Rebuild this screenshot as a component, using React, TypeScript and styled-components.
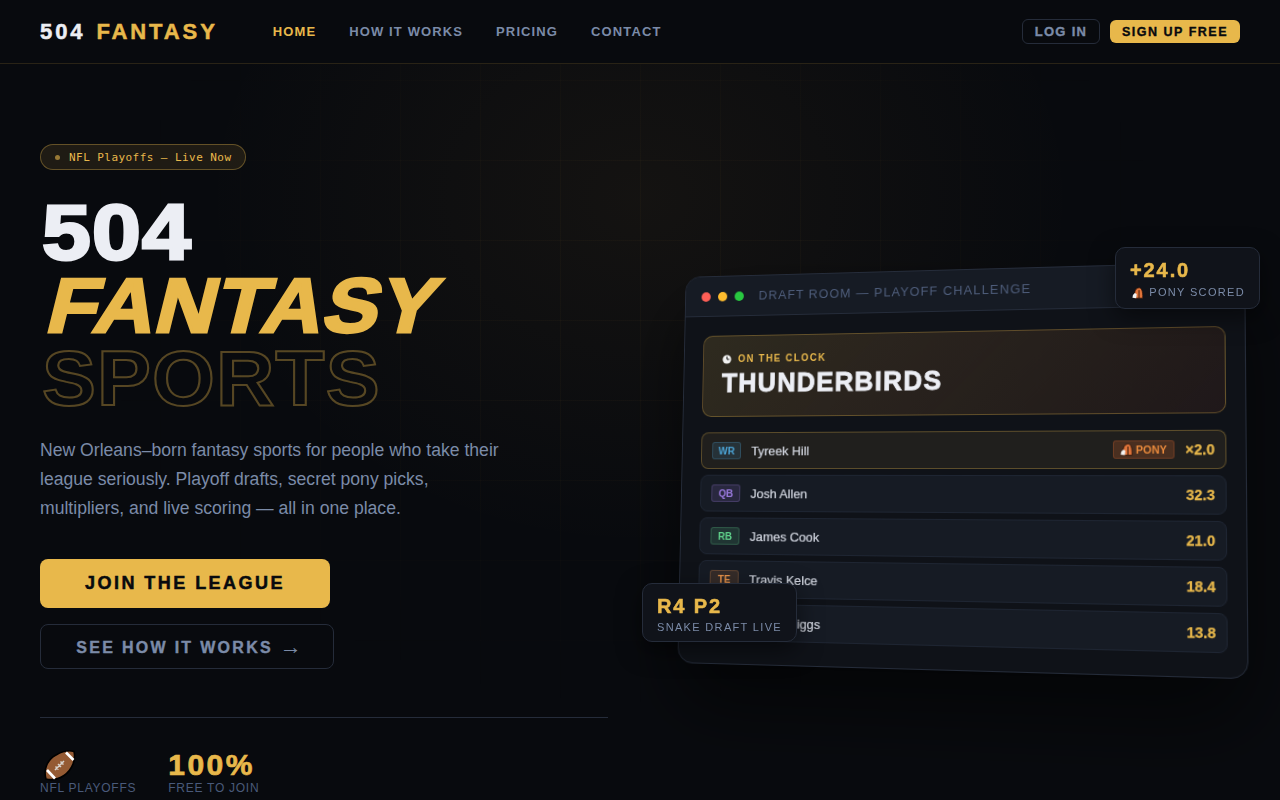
import React from "react";
import styled, { createGlobalStyle } from "styled-components";

const Global = createGlobalStyle`
  * { box-sizing: border-box; margin: 0; padding: 0; }
  html, body { background: #080a0e; }
  body { font-family: "Liberation Sans", Arial, sans-serif; color: #eceef4; overflow: hidden; height: 800px; }
`;
const Page = styled.div`
  width: 1280px; height: 800px; overflow: hidden; position: relative; background: #080a0e;
`;
const Glow = styled.div`
  position: absolute; left: 140px; top: 0; width: 1000px; height: 600px; pointer-events: none;
  background: radial-gradient(ellipse at 50% 33%, rgba(232,170,75,.055), transparent 62%);
`;
const Grid = styled.div`
  position: absolute; inset: 0; pointer-events: none;
  background-image: linear-gradient(rgba(232,184,75,.03) 1px, transparent 1px), linear-gradient(90deg, rgba(232,184,75,.03) 1px, transparent 1px);
  background-size: 80px 80px;
  mask-image: radial-gradient(ellipse 560px 420px at 640px 300px, #000 30%, transparent 100%);
`;
const Nav = styled.nav`
  height: 64px; display: flex; align-items: center; justify-content: space-between; padding: 0 40px;
  border-bottom: 1px solid rgba(232,184,75,.15); position: relative; z-index: 2; background: #080a0e;
`;
const NavLeft = styled.div`display: flex; align-items: center; gap: 55px;`;
const Logo = styled.div`
  font: 700 22px "Liberation Sans", sans-serif; letter-spacing: 2.9px; color: #eceef4; -webkit-text-stroke: .5px currentColor;
  span { color: #e8b84b; margin-left: 2px; }
`;
const NavLinks = styled.ul`display: flex; gap: 33px; list-style: none;`;
const NavLink = styled.li<{ $active?: boolean }>`
  font: 700 13px "Liberation Sans", sans-serif; letter-spacing: 1.12px; color: ${p => p.$active ? "#e8b84b" : "#7b8ba8"};
`;
const NavActions = styled.div`display: flex; gap: 10px; align-items: center;`;
const GhostSmall = styled.button`
  height: 25px; width: 78px; border: 1px solid #252c3a; border-radius: 6px; background: transparent;
  font: 700 13px "Liberation Sans", sans-serif; letter-spacing: 1.3px; color: #7b8ba8; -webkit-text-stroke: .35px currentColor;
`;
const GoldSmall = styled.button`
  height: 23px; width: 130px; border: 0; border-radius: 6px; background: #e8b84b;
  font: 700 12.5px "Liberation Sans", sans-serif; letter-spacing: 1.5px; color: #080a0e; -webkit-text-stroke: .35px currentColor;
`;
const Hero = styled.main`display: flex; height: 736px; position: relative; padding-left: 40px;`;
const Left = styled.section`position: relative; z-index: 1; padding-top: 80px; width: 568px;`;
const Badge = styled.div`
  display: inline-flex; align-items: center; gap: 9px; height: 26px; padding: 0 14px; border-radius: 13px;
  border: 1px solid rgba(232,184,75,.35); background: rgba(232,184,75,.1);
  font: 11px "DejaVu Sans Mono", monospace; letter-spacing: .44px; color: #e8b84b;
`;
const Dot = styled.i`width: 5px; height: 5px; border-radius: 50%; background: #e8b84b; opacity: .6;`;
const Title = styled.h1`
  margin-top: 26px; padding-left: 2px; font: 700 77px/73px "Liberation Sans", sans-serif; letter-spacing: 1px; color: #eceef4;
  display: flex; flex-direction: column; align-items: flex-start;
`;
const Solid = styled.span`
  display: inline-block; -webkit-text-stroke: 2.8px #eceef4; transform: scaleX(1.14); transform-origin: 0 50%;
`;
const Gold = styled.span`
  color: #e8b84b; -webkit-text-stroke: 2.8px #e8b84b; display: inline-block; margin-left: 2px;
  transform: skewX(-14deg) scaleX(1.08); transform-origin: 0 83%;
`;
const Outline = styled.span`
  display: inline-block; color: transparent; -webkit-text-stroke: 2px rgba(232,184,75,.35); transform: scaleX(1.05); transform-origin: 0 50%;
`;
const Sub = styled.p`
  margin-top: 21px; width: 470px; font: 17.6px/29px "Liberation Sans", sans-serif; color: #7b8ba8;
`;
const Buttons = styled.div`margin-top: 36px; display: flex; flex-direction: column; gap: 16px; align-items: flex-start;`;
const Primary = styled.button`
  width: 290px; height: 49px; border: 0; border-radius: 8px; background: #e8b84b;
  font: 700 18px "Liberation Sans", sans-serif; letter-spacing: 2.45px; color: #080a0e; -webkit-text-stroke: .5px currentColor;
`;
const Secondary = styled.button`
  width: 294px; height: 45px; border: 1px solid #252c3a; border-radius: 8px; background: transparent; padding-left: 4px;
  font: 700 16px "Liberation Sans", sans-serif; letter-spacing: 2.3px; color: #7b8ba8; -webkit-text-stroke: .4px currentColor;
`;
const Arrow = styled.span`font: 400 22px/1 "Liberation Sans", sans-serif; letter-spacing: 0; -webkit-text-stroke: 0; vertical-align: -1px;`;
const Stats = styled.div`margin-top: 48px; width: 568px; border-top: 1px solid #252c3a; padding-top: 32px; display: flex; gap: 32px;`;
const Stat = styled.div`display: flex; flex-direction: column; align-items: flex-start;`;
const StatIcon = styled.div`height: 30px; padding-left: 4px;`;
const StatValue = styled.div`font: 700 30px/30px "Liberation Sans", sans-serif; letter-spacing: 2.5px; color: #e8b84b; -webkit-text-stroke: .7px currentColor;`;
const StatLabel = styled.div`font: 12px/16px "Liberation Sans", sans-serif; letter-spacing: .74px; color: #4a5a7a;`;
const Right = styled.section`position: relative; z-index: 1; flex: 1;`;
const Scene = styled.div`
  position: absolute; left: 60px; top: 203px; width: 570px; height: 402px;
`;
const Card = styled.div`
  width: 100%; height: 100%; background: #0f1218; border: 1px solid #252c3a; border-radius: 16px; overflow: hidden;
  transform: perspective(1000px) rotateY(-8deg) rotateX(3deg);
  box-shadow: 0 40px 80px rgba(0,0,0,.6);
`;
const CardBar = styled.div`
  height: 42px; background: #161b24; border-bottom: 1px solid #252c3a; display: flex; align-items: center; padding: 0 17px; gap: 8px;
`;
const Light = styled.i<{ $c: string }>`width: 10px; height: 10px; border-radius: 50%; background: ${p => p.$c};`;
const BarTitle = styled.span`margin-left: 8px; font: 400 13px "Liberation Sans", sans-serif; letter-spacing: 1.15px; color: #4f5e7c;`;
const CardBody = styled.div`padding: 18px 18px 18px 20px; display: flex; flex-direction: column; gap: 6px;`;
const Clock = styled.div`
  height: 85px; border: 1px solid rgba(232,184,75,.3); border-radius: 10px; padding: 16px 20px; margin: 2px 0 10px;
  background: linear-gradient(135deg, rgba(232,184,75,.15), rgba(232,100,50,.08));
`;
const ClockLabel = styled.div`font: 700 10px/16px "Liberation Sans", sans-serif; letter-spacing: 1.5px; color: #e8b84b; display: flex; align-items: center; gap: 7px;`;
const ClockName = styled.div`font: 700 27px/30px "Liberation Sans", sans-serif; letter-spacing: 1.3px; color: #eceef4; margin-top: 2px; -webkit-text-stroke: .8px currentColor;`;
const Row = styled.div<{ $hi?: boolean }>`
  height: 38px; border-radius: 8px; display: flex; align-items: center; padding: 0 10px 0 11px; gap: 11px;
  background: ${p => p.$hi ? "rgba(232,184,75,.08)" : "#161b24"};
  border: 1px solid ${p => p.$hi ? "rgba(232,184,75,.3)" : "#1e2532"};
`;
const Pos = styled.span<{ $c: string }>`
  width: 31px; height: 18px; border-radius: 3px; display: flex; align-items: center; justify-content: center;
  font: 700 10.5px "Liberation Sans", sans-serif; color: ${p => p.$c}; background: ${p => p.$c}26; border: 1px solid ${p => p.$c}40;
`;
const Name = styled.span`flex: 1; font: 400 13.2px "Liberation Sans", sans-serif; color: #d4d8e2; -webkit-text-stroke: .2px currentColor;`;
const PonyTag = styled.span`
  height: 18px; display: flex; align-items: center; gap: 3px; padding: 0 6.5px; margin-right: -1px; border-radius: 3px; background: rgba(240,110,50,.2); border: 1px solid rgba(240,110,50,.22);
  font: 700 10.5px "Liberation Sans", sans-serif; color: #ea8a3c;
`;
const Pts = styled.span`font: 700 14px "Liberation Sans", sans-serif; color: #e8b84b; -webkit-text-stroke: .25px currentColor;`;
const FloatValue = styled.div`font: 700 20px/20px "Liberation Sans", sans-serif; letter-spacing: 1.9px; color: #e8b84b; -webkit-text-stroke: .55px currentColor;`;
const FloatLabel = styled.div`font: 400 11px/14px "Liberation Sans", sans-serif; letter-spacing: 1.33px; color: #7b8ba8; margin-top: 4px; display: flex; align-items: center; gap: 6px; white-space: nowrap;`;
const Float = styled.div`
  position: absolute; background: #10131a; border: 1px solid #252c3a; border-radius: 10px; padding: 12px 14px; z-index: 3;
  box-shadow: 0 8px 24px rgba(0,0,0,.5);
`;
const FloatTop = styled(Float)`
  left: 447px; top: -20px; width: 145px; height: 62px;
  ${FloatLabel} { line-height: 17px; padding-left: 2px; }
`;
const FloatBottom = styled(Float)`left: -26px; top: 316px; width: 155px; height: 59px;`;

function Football() {
  return (
    <svg width="32" height="31" viewBox="0 0 32 31">
      <path d="M2 29C-1 19 4 9 12 5 18 1.5 25 0 30 1.5 32 10 28 20 20 25.5 14 29.5 8 30.5 2 29Z" fill="#945a33" stroke="#000" strokeWidth="1.6" />
      <path d="M3 20L11 28.5M22 2.5L29.5 10" stroke="#fff" strokeWidth="2.6" />
      <path d="M11 20L20 11M11.5 16.5L14.5 19.5M14 14L17 17M16.5 11.5L19.5 14.5" stroke="#d8d2cc" strokeWidth="1.5" />
    </svg>
  );
}
function PonyIcon() {
  return (
    <svg width="12" height="12" viewBox="0 0 12 12">
      <path d="M2.5 11.5L3 5C3.5 2 5.5.5 7.5.5 10 .5 11.5 3 11.5 11.5Z" fill="#e0743a" stroke="#2a1208" strokeWidth=".8" />
      <path d="M7.5 3V11.5" stroke="#3a1a0a" strokeWidth="1" />
      <path d="M.5 11L1 8 3 6 5 7 4.5 11.5Z" fill="#f2f2f2" />
    </svg>
  );
}
function ClockIcon() {
  return (
    <svg width="10" height="10" viewBox="0 0 10 10">
      <circle cx="5" cy="5" r="4.6" fill="#f2f2f2" />
      <path d="M5 2V5H7.5" stroke="#111" strokeWidth="1" fill="none" />
    </svg>
  );
}

const rows = [
  { pos: "WR", c: "#4ba3d4", name: "Tyreek Hill", pts: "×2.0", hi: true },
  { pos: "QB", c: "#9b7ae0", name: "Josh Allen", pts: "32.3" },
  { pos: "RB", c: "#5fd08a", name: "James Cook", pts: "21.0" },
  { pos: "TE", c: "#e8934b", name: "Travis Kelce", pts: "18.4" },
  { pos: "WR", c: "#4ba3d4", name: "Stefon Diggs", pts: "13.8" },
];

export default function App() {
  return (
    <Page>
      <Global />
      <Glow />
      <Grid />
      <Nav>
        <NavLeft>
          <Logo>504 <span>FANTASY</span></Logo>
          <NavLinks>
            <NavLink $active>HOME</NavLink>
            <NavLink>HOW IT WORKS</NavLink>
            <NavLink>PRICING</NavLink>
            <NavLink>CONTACT</NavLink>
          </NavLinks>
        </NavLeft>
        <NavActions>
          <GhostSmall>LOG IN</GhostSmall>
          <GoldSmall>SIGN UP FREE</GoldSmall>
        </NavActions>
      </Nav>
      <Hero>
        <Left>
          <Badge><Dot />NFL Playoffs — Live Now</Badge>
          <Title>
            <Solid>504</Solid>
            <Gold>FANTASY</Gold>
            <Outline>SPORTS</Outline>
          </Title>
          <Sub>New Orleans–born fantasy sports for people who take their league seriously. Playoff drafts, secret pony picks, multipliers, and live scoring — all in one place.</Sub>
          <Buttons>
            <Primary>JOIN THE LEAGUE</Primary>
            <Secondary>SEE HOW IT WORKS <Arrow>→</Arrow></Secondary>
          </Buttons>
          <Stats>
            <Stat><StatIcon><Football /></StatIcon><StatLabel>NFL PLAYOFFS</StatLabel></Stat>
            <Stat><StatValue>100%</StatValue><StatLabel>FREE TO JOIN</StatLabel></Stat>
          </Stats>
        </Left>
        <Right>
          <Scene>
            <Card>
              <CardBar>
                <Light $c="#ff5f57" /><Light $c="#febc2e" /><Light $c="#28c840" />
                <BarTitle>DRAFT ROOM — PLAYOFF CHALLENGE</BarTitle>
              </CardBar>
              <CardBody>
                <Clock>
                  <ClockLabel><ClockIcon />ON THE CLOCK</ClockLabel>
                  <ClockName>THUNDERBIRDS</ClockName>
                </Clock>
                {rows.map(r => (
                  <Row key={r.name} $hi={r.hi}>
                    <Pos $c={r.c}>{r.pos}</Pos>
                    <Name>{r.name}</Name>
                    {r.hi && <PonyTag><PonyIcon />PONY</PonyTag>}
                    <Pts>{r.pts}</Pts>
                  </Row>
                ))}
              </CardBody>
            </Card>
            <FloatTop>
              <FloatValue>+24.0</FloatValue>
              <FloatLabel><PonyIcon />PONY SCORED</FloatLabel>
            </FloatTop>
            <FloatBottom>
              <FloatValue>R4 P2</FloatValue>
              <FloatLabel>SNAKE DRAFT LIVE</FloatLabel>
            </FloatBottom>
          </Scene>
        </Right>
      </Hero>
    </Page>
  );
}
